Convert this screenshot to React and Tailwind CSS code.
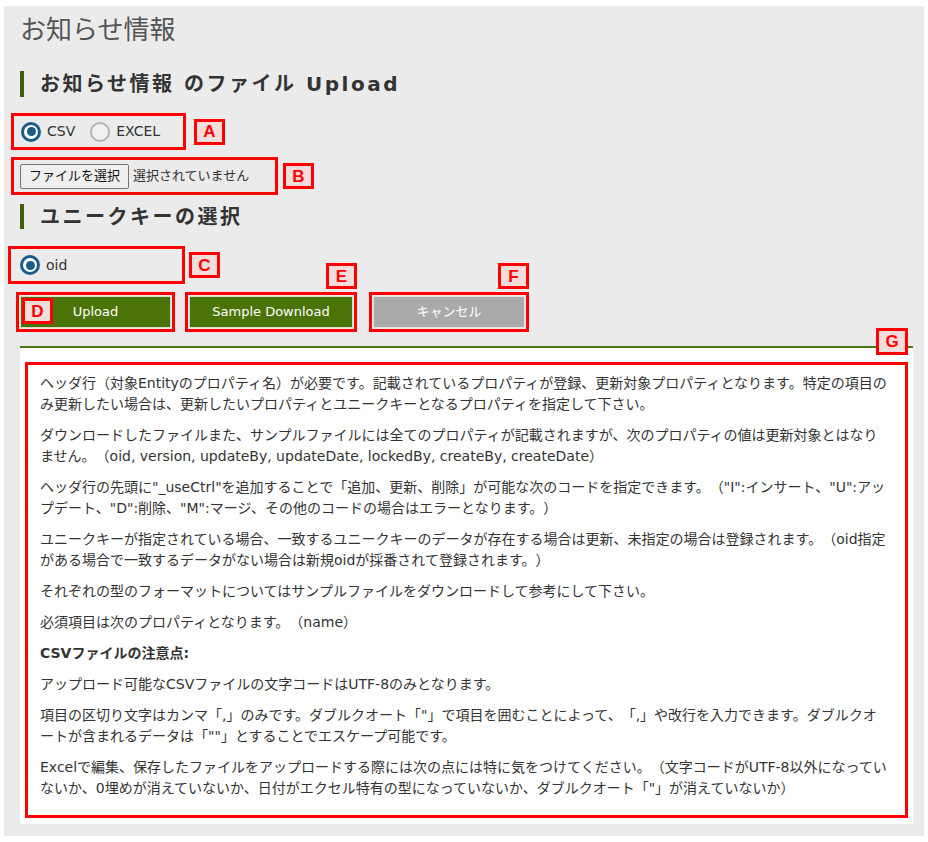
import React from 'react';

const RED = 'border-[#ff0000]';

const Tag = ({ children, className = '' }) => (
  <span className={`inline-flex items-center justify-center w-[31px] h-[26px] border-[3px] border-[#ff0000] bg-[#f3dcdc] text-[#ff0000] font-['Liberation_Sans',sans-serif] font-bold text-[17px] leading-none ${className}`}>
    {children}
  </span>
);

const Radio = ({ checked, className = '' }) =>
  checked ? (
    <span className={`w-5 h-5 rounded-full border-[3px] border-[#1b5c86] bg-white flex items-center justify-center shrink-0 ${className}`}>
      <span className="w-[9px] h-[9px] rounded-full bg-[#1b5c86]" />
    </span>
  ) : (
    <span className={`block w-5 h-5 rounded-full border-2 border-[#b3b3b3] bg-[#f1f1f1] shrink-0 ${className}`} />
  );

const Heading = ({ children, className = '' }) => (
  <div className={`flex items-stretch ${className}`}>
    <div className="w-[4px] bg-[#3f5f0a]" />
    <h2 className="ml-4 flex items-center text-[20px] font-bold tracking-[2.5px] text-[#333] leading-none">{children}</h2>
  </div>
);

// each entry is one paragraph, split where the reference wraps
const notes = [
  ['ヘッダ行（対象Entityのプロパティ名）が必要です。記載されているプロパティが登録、更新対象プロパティとなります。特定の項目の', 'み更新したい場合は、更新したいプロパティとユニークキーとなるプロパティを指定して下さい。'],
  ['ダウンロードしたファイルまた、サンプルファイルには全てのプロパティが記載されますが、次のプロパティの値は更新対象とはなり', 'ません。（oid, version, updateBy, updateDate, lockedBy, createBy, createDate）'],
  ['ヘッダ行の先頭に"_useCtrl"を追加することで「追加、更新、削除」が可能な次のコードを指定できます。（"I":インサート、"U":アッ', 'プデート、"D":削除、"M":マージ、その他のコードの場合はエラーとなります。）'],
  ['ユニークキーが指定されている場合、一致するユニークキーのデータが存在する場合は更新、未指定の場合は登録されます。（oid指定', 'がある場合で一致するデータがない場合は新規oidが採番されて登録されます。）'],
  ['それぞれの型のフォーマットについてはサンプルファイルをダウンロードして参考にして下さい。'],
  ['必須項目は次のプロパティとなります。（name）'],
];

const csvNotes = [
  ['アップロード可能なCSVファイルの文字コードはUTF-8のみとなります。'],
  ['項目の区切り文字はカンマ「,」のみです。ダブルクオート「"」で項目を囲むことによって、「,」や改行を入力できます。ダブルクオ', 'ートが含まれるデータは「""」とすることでエスケープ可能です。'],
  ['Excelで編集、保存したファイルをアップロードする際には次の点には特に気をつけてください。（文字コードがUTF-8以外になってい', 'ないか、0埋めが消えていないか、日付がエクセル特有の型になっていないか、ダブルクオート「"」が消えていないか）'],
];

const Para = ({ lines, className = '' }) => (
  <p className={`whitespace-nowrap ${className}`}>
    {lines.map((l, i) => (
      <React.Fragment key={i}>
        {i > 0 && <br />}
        {l}
      </React.Fragment>
    ))}
  </p>
);

export default function App() {
  return (
    <div className="min-h-[842px] bg-white pt-[6px] px-[4px] font-['DejaVu_Sans','Noto_Sans_CJK_JP',sans-serif] text-[#333] [text-spacing-trim:space-all]">
      <div className="bg-[#ebebeb] pl-4 pr-[11px] pt-[8px] pb-3">
        <h1 className="text-[26px] leading-[32px] text-[#555] font-normal">お知らせ情報</h1>

        <Heading className="mt-[25px] h-[26px]">お知らせ情報 のファイル Upload</Heading>

        {/* A: format */}
        <div className="mt-4 -ml-[9px] flex items-center gap-[8px]">
          <div className={`flex items-center w-[175px] h-[37px] border-[3px] ${RED} pl-[7px] text-[14px]`}>
            <Radio checked />
            <span className="ml-[6px]">CSV</span>
            <Radio className="ml-[15px]" />
            <span className="ml-[6px]">EXCEL</span>
          </div>
          <Tag>A</Tag>
        </div>

        {/* B: file */}
        <div className="mt-[7px] -ml-[9px] flex items-center gap-[5px]">
          <div className={`flex items-center w-[267px] h-[38px] border-[3px] ${RED} pl-[6px] text-[13px]`}>
            <button className="h-[25px] w-[109px] border border-[#767676] rounded-[2px] bg-[#efefef] text-[13px] text-[#111]">ファイルを選択</button>
            <span className="ml-[4px]">選択されていません</span>
          </div>
          <Tag>B</Tag>
        </div>

        <Heading className="mt-[9px] h-[25px]">ユニークキーの選択</Heading>

        {/* C: unique key */}
        <div className="mt-[17px] -ml-[12px] flex items-center gap-[4px]">
          <div className={`flex items-center w-[177px] h-[38px] border-[3px] ${RED} pl-[9px] text-[14px]`}>
            <Radio checked />
            <span className="ml-[6px]">oid</span>
          </div>
          <Tag>C</Tag>
        </div>

        {/* buttons */}
        <div className="mt-[8px] -ml-[4px] flex items-start">
          <div className={`relative border-[3px] ${RED} p-[1px]`}>
            <button className="w-[151px] h-[32px] bg-[#4b7408] border border-[#d9dfcf] text-white text-[13px]">Upload</button>
            <Tag className="absolute left-[3px] top-[3px] w-[30px]">D</Tag>
          </div>
          <div className={`relative ml-[10px] border-[3px] ${RED} p-[1px]`}>
            <button className="w-[164px] h-[32px] bg-[#4b7408] border border-[#d9dfcf] text-white text-[13px]">Sample Download</button>
            <Tag className="absolute -right-[3px] -top-[32px] w-[30px]">E</Tag>
          </div>
          <div className={`relative ml-[12px] border-[3px] ${RED} p-[1px]`}>
            <button className="w-[152px] h-[32px] bg-[#aaaaaa] border border-[#e2e2e2] text-white text-[13px]">キャンセル</button>
            <Tag className="absolute -right-[3px] -top-[32px]">F</Tag>
          </div>
        </div>

        {/* G: notes */}
        <div className="relative mt-[14px] bg-white border-t-2 border-[#4b7a0c] pt-[14px] px-[5px] pb-[6px]">
          <Tag className="absolute right-[5px] -top-[20px] w-[32px] h-[27px]">G</Tag>
          <div className={`border-[3px] ${RED} pt-[8px] pb-[16px] px-[12px] text-[14px] leading-[21px]`}>
            {notes.map((lines, i) => (
              <Para key={i} lines={lines} className="mb-[10px]" />
            ))}
            <p className="mb-[10px] font-bold">CSVファイルの注意点:</p>
            {csvNotes.map((lines, i) => (
              <Para key={i} lines={lines} className={i < csvNotes.length - 1 ? 'mb-[10px]' : ''} />
            ))}
          </div>
        </div>
      </div>
    </div>
  );
}
